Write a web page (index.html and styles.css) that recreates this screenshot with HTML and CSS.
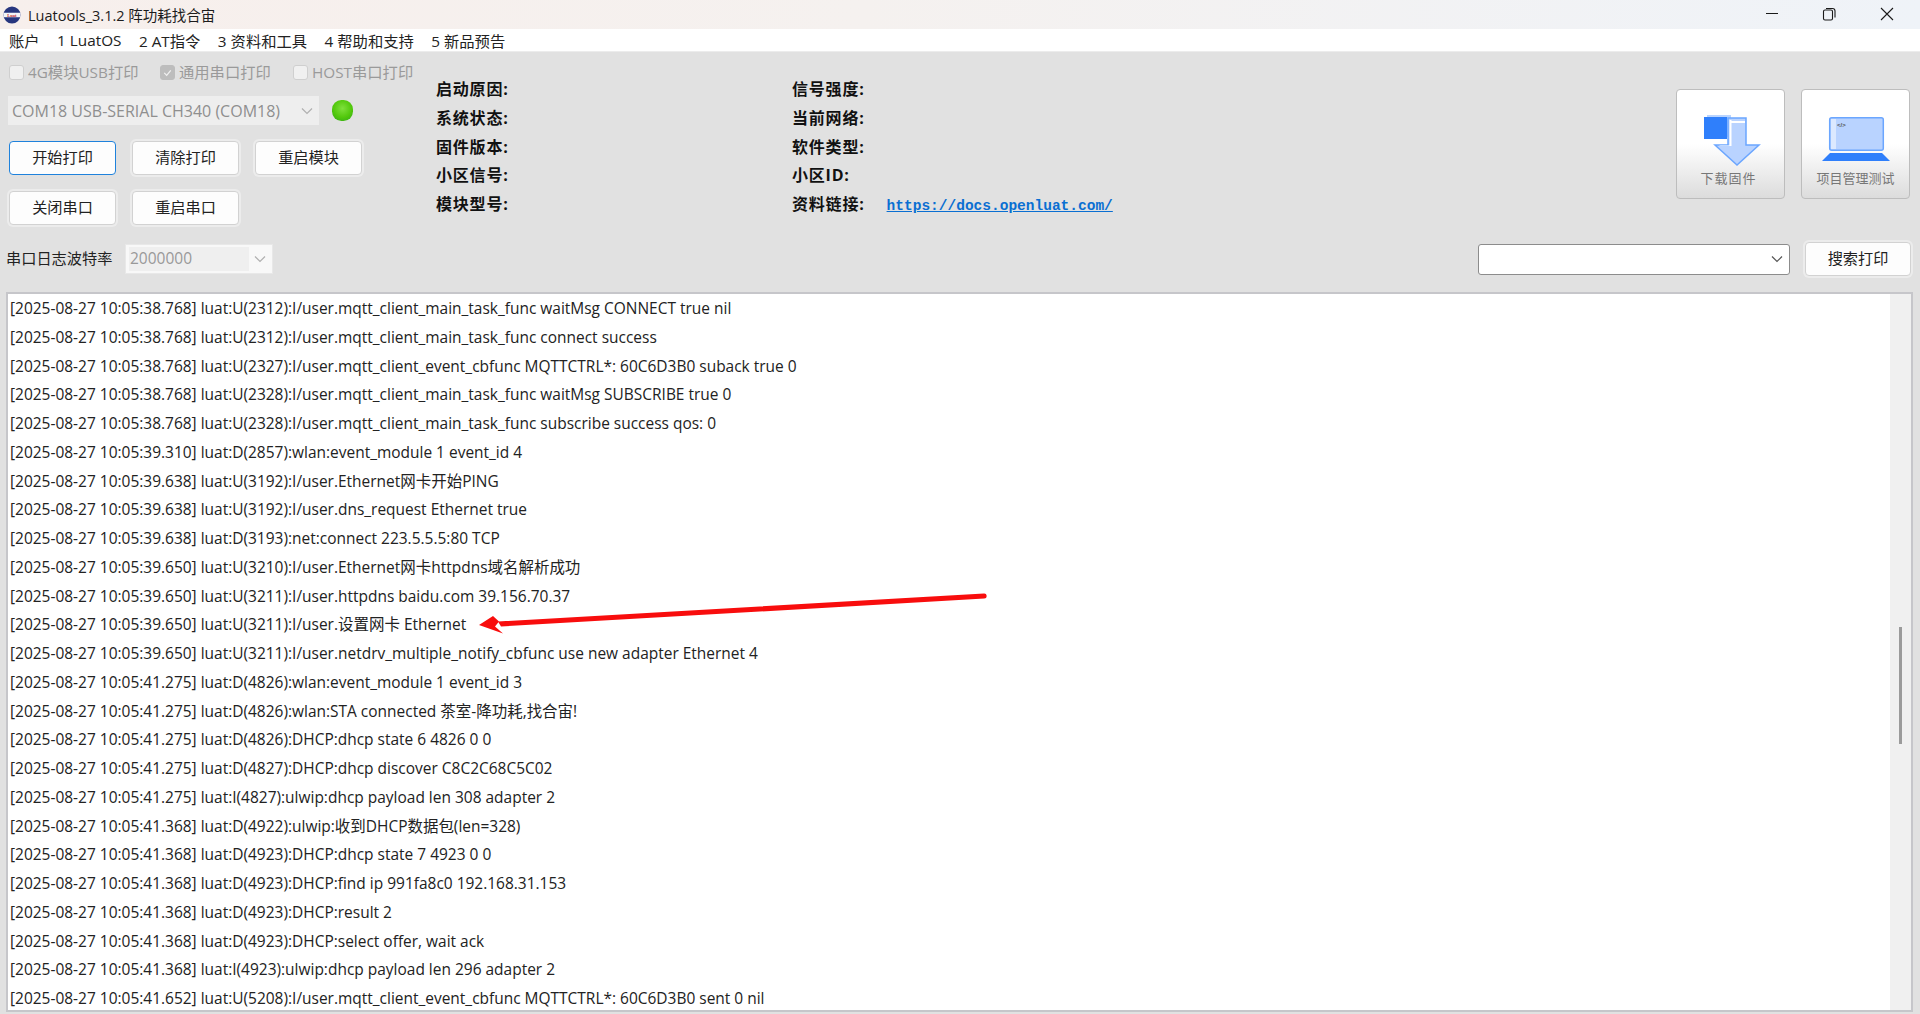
FILE: index.html
```html
<!DOCTYPE html>
<html lang="zh-CN">
<head>
<meta charset="utf-8">
<title>Luatools</title>
<link rel="stylesheet" href="styles.css">
</head>
<body>
<div class="window">
  <header class="titlebar">
    <svg class="logo" viewBox="0 0 20 20"><circle cx="10" cy="10" r="9.5" fill="#27367f"/><path d="M0.6 7.5h18.8v5H0.6z" fill="#f4f4f8"/><text x="10" y="11.8" class="logo-text">Luat</text></svg>
    <span class="title">Luatools_3.1.2 阵功耗找合宙</span>
    <div class="winctl">
      <svg viewBox="0 0 58 29"><path d="M24 13.5h12" stroke="#1a1a1a" fill="none"/></svg>
      <svg viewBox="0 0 58 29"><path d="M23.5 11.5a1.5 1.5 0 0 1 1.500-1.500h6a1.500 1.500 0 0 1 1.500 1.500v7a1.500 1.500 0 0 1-1.500 1.500h-6a1.500 1.500 0 0 1-1.500-1.500z M26 8.500h6.500a2.500 2.500 0 0 1 2.500 2.500v6.500" stroke="#1a1a1a" stroke-width="1.100" fill="none"/></svg>
      <svg viewBox="0 0 58 29"><path d="M23 8l12 12M35 8L23 20" stroke="#1a1a1a" stroke-width="1.100" fill="none"/></svg>
    </div>
  </header>
  <nav class="menubar">
    <span>账户</span><span>1 LuatOS</span><span>2 AT指令</span><span>3 资料和工具</span><span>4 帮助和支持</span><span>5 新品预告</span>
  </nav>
  <main class="panel">
    <section class="top">
      <div class="controls">
        <div class="checks">
          <label class="check c1"><i class="box"></i>4G模块USB打印</label>
          <label class="check c2"><i class="box on"><svg viewBox="0 0 16 16"><path d="M4 8.500l3 3 5-6" stroke="#f2f2f2" stroke-width="1.500" fill="none"/></svg></i>通用串口打印</label>
          <label class="check"><i class="box"></i>HOST串口打印</label>
        </div>
        <div class="portrow">
          <div class="combo port"><span>COM18 USB-SERIAL CH340 (COM18)</span><svg class="chev" viewBox="0 0 12 8"><path d="M1 1.500l5 5 5-5" stroke="#b0b0b0" stroke-width="1.200" fill="none"/></svg></div>
          <i class="led"></i>
        </div>
        <div class="btnrow">
          <button class="btn focus">开始打印</button><button class="btn">清除打印</button><button class="btn">重启模块</button>
        </div>
        <div class="btnrow">
          <button class="btn">关闭串口</button><button class="btn">重启串口</button>
        </div>
      </div>
      <dl class="info first">
        <dt>启动原因:</dt><dt>系统状态:</dt><dt>固件版本:</dt><dt>小区信号:</dt><dt>模块型号:</dt>
      </dl>
      <dl class="info second">
        <dt>信号强度:</dt><dt>当前网络:</dt><dt>软件类型:</dt><dt>小区ID:</dt><dt class="linkrow">资料链接:<a href="#">https://docs.openluat.com/</a></dt>
      </dl>
      <div class="bigbtns">
        <button class="big">
          <svg viewBox="0 0 108 78" class="bigicon">
            <rect x="30" y="25" width="24" height="22" fill="#b9d4ff"/>
            <path d="M51 28h18v27h13L60 75 38 55h13z" fill="#b9d3ff" stroke="#6ba6ff" stroke-width="1.500"/>
            <path d="M52.500 30h2v26h-11l-2-.500h11z" fill="#fff"/>
            <path d="M54 31h14v2H54z" fill="#fff"/>
            <rect x="27" y="27" width="23" height="22" fill="#2f7ffb"/>
          </svg>
          <span class="biglabel spaced">下载固件</span>
        </button>
        <button class="big">
          <svg viewBox="0 0 108 78" class="bigicon">
            <rect x="27.700" y="27.700" width="53.600" height="32.600" rx="2" fill="#b9d3ff" stroke="#6ba6ff" stroke-width="1.500"/>
            <path d="M29 29h5v30h-5z" fill="#dce9ff"/>
            <text x="35" y="37" class="codetext">&lt;/&gt;</text>
            <path d="M28 63h52l8 8H20z" fill="#2f7ffb"/>
          </svg>
          <span class="biglabel">项目管理测试</span>
        </button>
      </div>
    </section>
    <section class="filter">
      <span class="baudlabel">串口日志波特率</span>
      <div class="combo baud"><span class="baudvalue">2000000</span><svg class="chev" viewBox="0 0 12 8"><path d="M1 1.500l5 5 5-5" stroke="#b0b0b0" stroke-width="1.200" fill="none"/></svg></div>
      <div class="combo search"><svg class="chev" viewBox="0 0 12 8"><path d="M1 1.500l5 5 5-5" stroke="#555" stroke-width="1.200" fill="none"/></svg></div>
      <button class="btn searchbtn">搜索打印</button>
    </section>
    <section class="log">
      <div class="lines">
        <div>[2025-08-27 10:05:38.768] luat:U(2312):I/user.mqtt_client_main_task_func waitMsg CONNECT true nil</div>
        <div>[2025-08-27 10:05:38.768] luat:U(2312):I/user.mqtt_client_main_task_func connect success</div>
        <div>[2025-08-27 10:05:38.768] luat:U(2327):I/user.mqtt_client_event_cbfunc MQTTCTRL*: 60C6D3B0 suback true 0</div>
        <div>[2025-08-27 10:05:38.768] luat:U(2328):I/user.mqtt_client_main_task_func waitMsg SUBSCRIBE true 0</div>
        <div>[2025-08-27 10:05:38.768] luat:U(2328):I/user.mqtt_client_main_task_func subscribe success qos: 0</div>
        <div>[2025-08-27 10:05:39.310] luat:D(2857):wlan:event_module 1 event_id 4</div>
        <div>[2025-08-27 10:05:39.638] luat:U(3192):I/user.Ethernet网卡开始PING</div>
        <div>[2025-08-27 10:05:39.638] luat:U(3192):I/user.dns_request Ethernet true</div>
        <div>[2025-08-27 10:05:39.638] luat:D(3193):net:connect 223.5.5.5:80 TCP</div>
        <div>[2025-08-27 10:05:39.650] luat:U(3210):I/user.Ethernet网卡httpdns域名解析成功</div>
        <div>[2025-08-27 10:05:39.650] luat:U(3211):I/user.httpdns baidu.com 39.156.70.37</div>
        <div>[2025-08-27 10:05:39.650] luat:U(3211):I/user.设置网卡 Ethernet</div>
        <div>[2025-08-27 10:05:39.650] luat:U(3211):I/user.netdrv_multiple_notify_cbfunc use new adapter Ethernet 4</div>
        <div>[2025-08-27 10:05:41.275] luat:D(4826):wlan:event_module 1 event_id 3</div>
        <div>[2025-08-27 10:05:41.275] luat:D(4826):wlan:STA connected 茶室-降功耗,找合宙!</div>
        <div>[2025-08-27 10:05:41.275] luat:D(4826):DHCP:dhcp state 6 4826 0 0</div>
        <div>[2025-08-27 10:05:41.275] luat:D(4827):DHCP:dhcp discover C8C2C68C5C02</div>
        <div>[2025-08-27 10:05:41.275] luat:I(4827):ulwip:dhcp payload len 308 adapter 2</div>
        <div>[2025-08-27 10:05:41.368] luat:D(4922):ulwip:收到DHCP数据包(len=328)</div>
        <div>[2025-08-27 10:05:41.368] luat:D(4923):DHCP:dhcp state 7 4923 0 0</div>
        <div>[2025-08-27 10:05:41.368] luat:D(4923):DHCP:find ip 991fa8c0 192.168.31.153</div>
        <div>[2025-08-27 10:05:41.368] luat:D(4923):DHCP:result 2</div>
        <div>[2025-08-27 10:05:41.368] luat:D(4923):DHCP:select offer, wait ack</div>
        <div>[2025-08-27 10:05:41.368] luat:I(4923):ulwip:dhcp payload len 296 adapter 2</div>
        <div>[2025-08-27 10:05:41.652] luat:U(5208):I/user.mqtt_client_event_cbfunc MQTTCTRL*: 60C6D3B0 sent 0 nil</div>
      </div>
      <div class="scrollbar"><i class="thumb"></i></div>
    </section>
  </main>
  <svg class="arrow" viewBox="0 0 520 44"><path d="M506 1.500a2.500 2.500 0 0 1 .300 5L23 34.500l-3-5z" fill="#f80d0d"/><path d="M1 33L15 24l6 5.500-4 5 8 7z" fill="#f80d0d"/></svg>
</div>
</body>
</html>
```
FILE: styles.css
```css
* { box-sizing: border-box; }
html, body { margin: 0; height: 100%; overflow: hidden; }
body { font-family: "Open Sans", "Noto Sans CJK SC", sans-serif; color: #222; background: #e1e1e1; }
.window { position: relative; display: flex; flex-direction: column; height: 1014px; }

.titlebar { height: 29px; display: flex; align-items: center; padding-left: 3px; background: linear-gradient(90deg, #f7efec 0%, #f5f1ef 45%, #eff3f8 100%); }
.logo { width: 18px; height: 18px; margin-right: 7px; flex: none; }
.logo-text { font: bold 5px "Liberation Serif", serif; fill: #c0272d; text-anchor: middle; }
.title { font-size: 14.500px; color: #1c1c1c; }
.winctl { margin-left: auto; display: flex; padding-right: 4px; }
.winctl svg { width: 58px; height: 29px; display: block; }

.menubar { height: 23px; background: #fff; border-bottom: 1px solid #ececec; display: flex; gap: 17.500px; padding-left: 9px; align-items: center; font-size: 15.300px; color: #222; white-space: nowrap; }

.panel { flex: 1; display: flex; flex-direction: column; min-height: 0; }
.top { height: 176px; display: flex; flex: none; }
.controls { width: 436px; flex: none; padding: 11px 0 0 9px; }
.checks { display: flex; height: 16px; align-items: center; font-size: 15.300px; color: #9a9a9a; }
.check { display: flex; align-items: center; white-space: nowrap; }
.c1 { width: 151px; }
.c2 { width: 133px; }
.box { width: 15px; height: 15px; margin: 2px 4px 0 0; border-radius: 3px; background: #f0f0f0; border: 1px solid #cfcfcf; display: block; flex: none; }
.box.on { background: #bdbdbd; border-color: #bdbdbd; }
.box svg { display: block; width: 13px; height: 13px; }

.portrow { display: flex; align-items: center; gap: 13px; margin: 17px 0 16px -1px; }
.combo { display: flex; align-items: center; position: relative; }
.port { width: 311px; height: 29px; background: #eeeeee; padding-left: 4px; font-size: 16px; color: #8f8f8f; white-space: nowrap; }
.chev { width: 12px; height: 8px; position: absolute; right: 6px; top: 50%; margin-top: -4px; }
.led { width: 21px; height: 21px; border-radius: 45%; display: block; background: radial-gradient(circle at 50% 40%, #7fe03c 0%, #52c80c 55%, #2ea51c 100%); }

.btnrow { display: flex; gap: 16px; margin-bottom: 16px; }
.btnrow:last-child { margin-bottom: 0; }
.btn { width: 107px; height: 34px; padding: 0 0 5px; border: 1px solid #d2d2d2; border-radius: 4px; background: #fdfdfd; box-shadow: 0 0 0 2px #ececec; font: 15.200px "Open Sans", "Noto Sans CJK SC", sans-serif; color: #222; }
.btn.focus { border-color: #1f82dc; box-shadow: none; }

.info { margin: 0; padding-top: 23px; flex: none; font-size: 16px; line-height: 28.750px; font-weight: 700; color: #111; letter-spacing: .8px; }
.info dt { white-space: nowrap; }
.first { width: 356px; }
.second { width: 400px; }
.linkrow a { margin-left: 22px; font: bold 14.500px/28px "Liberation Mono", monospace; color: #0a6fd2; letter-spacing: 0; }

.bigbtns { margin-left: auto; margin-right: 10px; margin-top: 37px; display: flex; gap: 16px; }
.big { width: 109px; height: 110px; padding: 0; display: flex; flex-direction: column; align-items: center; border: 1px solid #bdbdbd; border-radius: 4px; background: linear-gradient(180deg, #fff 0%, #fff 50%, #dcdcdc 100%); font-family: inherit; }
.bigicon { width: 108px; height: 78px; display: block; flex: none; }
.biglabel { font-size: 13px; line-height: 20px; color: #777; white-space: nowrap; }
.spaced { letter-spacing: 1px; margin-left: -4px; }
.codetext { font: bold 6px "Liberation Sans", sans-serif; fill: #555; }

.filter { height: 64px; flex: none; display: flex; align-items: center; padding: 0 9px 2px 6px; }
.baudlabel { font-size: 15.200px; line-height: 20px; margin-bottom: 2px; color: #222; width: 119px; white-space: nowrap; }
.baud { width: 148px; height: 30px; background: #f8f8f8; border: 1px solid #e8e8e8; padding-left: 3px; }
.baudvalue { display: block; width: 120px; height: 24px; padding-left: 1px; background: #efefef; font-size: 15.500px; line-height: 22px; color: #999; }
.search { width: 312px; height: 31px; margin-left: auto; margin-right: -1px; background: #fff; border: 1px solid #8c8c8c; border-radius: 3px; }
.searchbtn { width: 106px; height: 34px; margin-left: 16px; }

.log { flex: none; height: 720px; margin: 0 7px 2px 6px; display: flex; background: #fff; border: 2px solid #c6c6ca; }
.lines { flex: 1; padding: 0 0 0 2px; font-size: 15.470px; line-height: 28.750px; color: #222; white-space: nowrap; }
.scrollbar { width: 21px; background: #f0f0f0; position: relative; }
.thumb { position: absolute; left: 9px; top: 333px; width: 3px; height: 117px; background: #9b9b9b; display: block; }

.arrow { position: absolute; left: 478px; top: 592px; width: 520px; height: 44px; }
```
